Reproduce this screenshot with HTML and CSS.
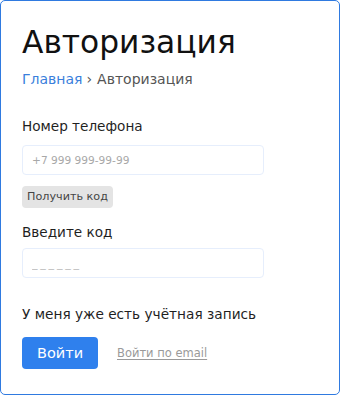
FILE: index.html
```html
<!DOCTYPE html>
<html lang="ru"><head><meta charset="utf-8"><title>Авторизация</title><link rel="stylesheet" href="styles.css"></head>
<body>
<div class="card">
  <h1 class="title">Авторизация</h1>
  <nav class="crumbs"><a class="crumb-link" href="#">Главная</a><span class="crumb-sep">›</span><span class="crumb-cur">Авторизация</span></nav>
  <label class="label label-phone">Номер телефона</label>
  <input class="field" type="text" placeholder="+7 999 999-99-99">
  <div class="get-row"><button class="get-code" type="button">Получить код</button></div>
  <label class="label label-code">Введите код</label>
  <input class="field field-code" type="text" placeholder="______">
  <p class="account">У меня уже есть учётная запись</p>
  <div class="actions">
    <button class="login" type="button">Войти</button>
    <a class="email-link" href="#">Войти по email</a>
  </div>
</div>
</body></html>
```
FILE: styles.css
```css
html,body{margin:0;padding:0;background:#fff;}
body{font-family:"DejaVu Sans","Noto Sans",sans-serif;color:#1a1a1a;}
.card{box-sizing:border-box;width:340px;height:395px;border:1px solid #2f7ae0;border-radius:5px;padding:22px 21px 0 21px;display:flex;flex-direction:column;align-items:flex-start;}
.title{margin:0;font-size:31.3px;font-weight:400;line-height:38px;color:#111;}
.crumbs{margin-top:8px;font-size:14px;line-height:20px;display:flex;align-items:center;}
.crumb-link{color:#3a7fdc;text-decoration:none;}
.crumb-sep{color:#555;margin:0 5px 0 4px;}
.crumb-cur{color:#555;}
.label{display:block;font-size:13.6px;line-height:18px;color:#1f1f1f;}
.label-phone{margin-top:28px;}
.label-code{margin-top:15px;}
.field{box-sizing:border-box;width:242px;height:30px;margin:10px 0 0 0;border:1px solid #e6eefc;border-radius:4px;padding:0 9px;font-family:inherit;font-size:10.6px;color:#333;outline:none;background:#fff;}
.field::placeholder{color:#a8a8a8;}
.field-code{margin-top:7px;font-size:11px;}
.field-code::placeholder{letter-spacing:2.8px;color:#b8b8b8;}
.get-row{margin-top:10px;}
.get-code{box-sizing:border-box;height:22px;padding:0 5px;border:0;border-radius:4px;background:#e4e4e4;color:#444;font-family:inherit;font-size:11.2px;line-height:22px;cursor:pointer;}
.account{margin:27px 0 0 0;font-size:13.7px;line-height:18px;color:#1f1f1f;}
.actions{margin-top:14px;display:flex;align-items:center;gap:19px;}
.login{box-sizing:border-box;width:76px;height:32px;border:0;border-radius:4px;background:#2f80ed;color:#fff;font-family:inherit;font-size:14.5px;cursor:pointer;}
.email-link{color:#9a9a9a;font-size:11.5px;text-decoration:underline;text-underline-offset:2px;}
```
